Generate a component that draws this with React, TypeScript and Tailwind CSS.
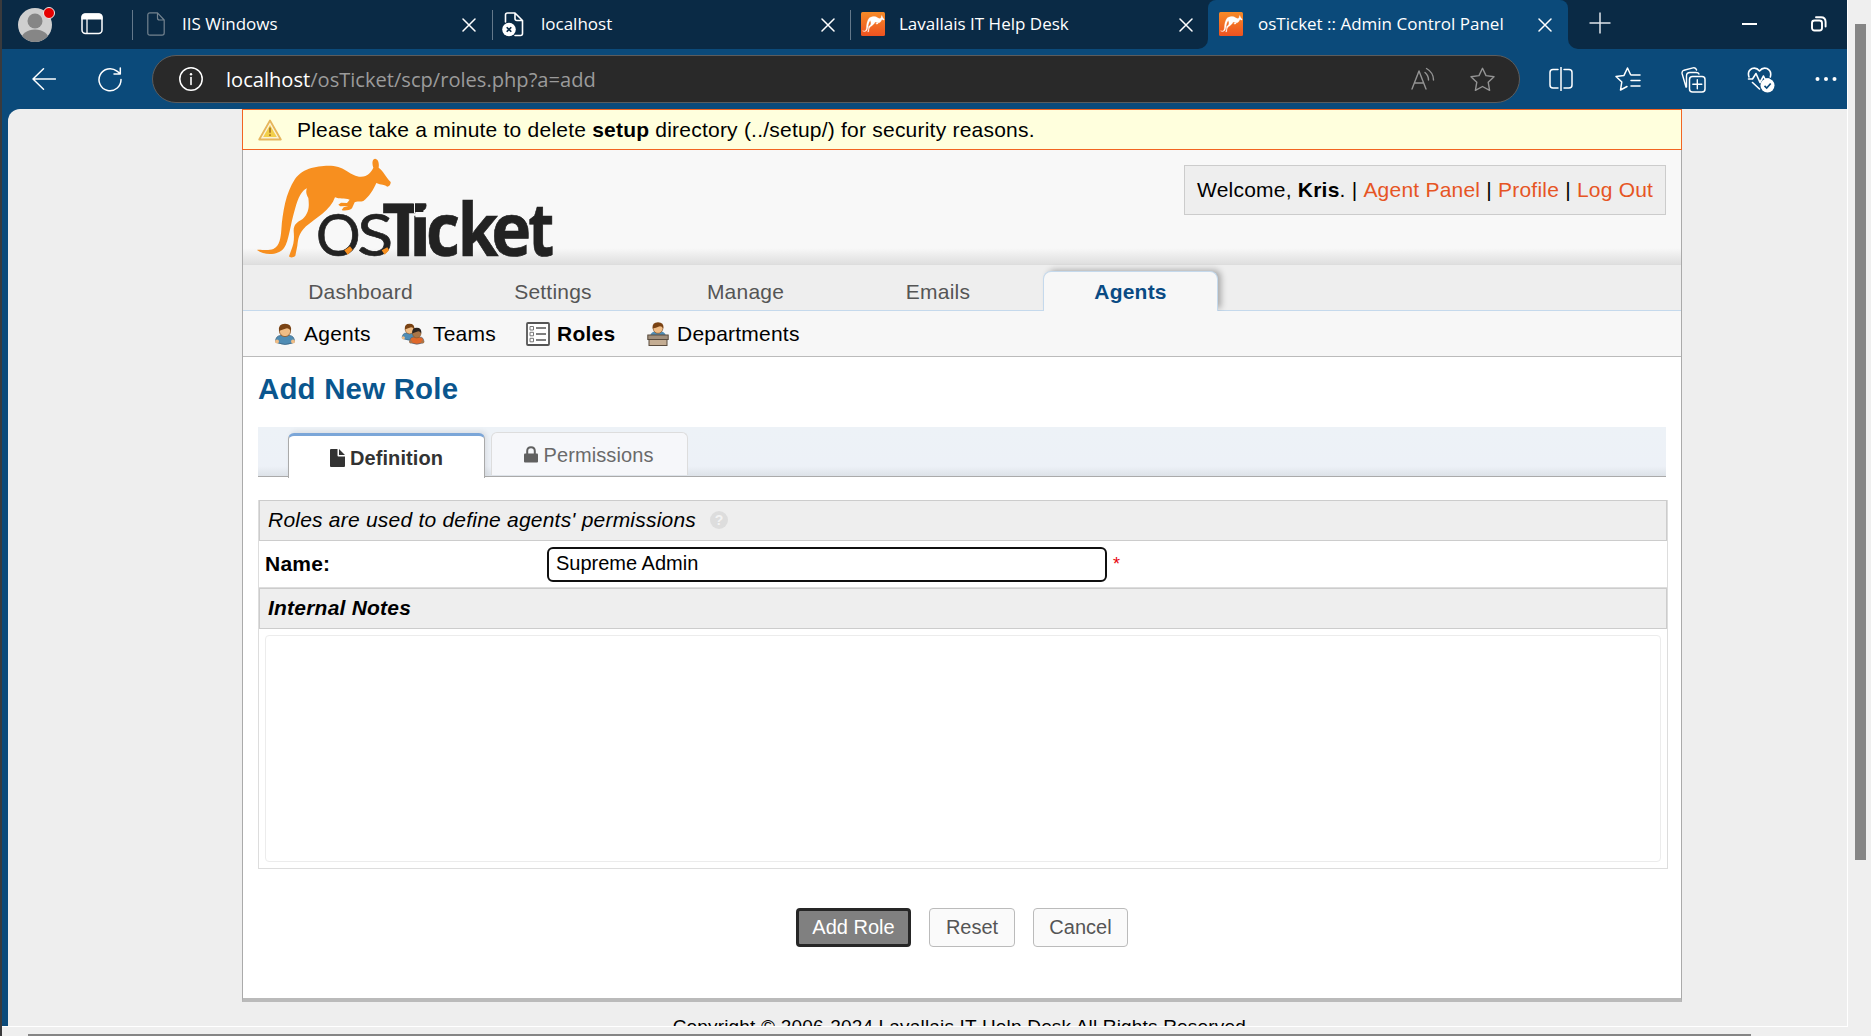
import React from 'react';

const ROO =
  'M66 433 C72 430 98 437 115 430 C135 420 137 395 139 372 C143 320 152 262 180 220 C205 185 250 180 288 180 C332 182 346 213 378 213 C398 213 410 198 415 186 C410 172 412 160 420 159 C430 160 433 172 431 186 C444 194 453 215 467 229 C468 236 462 243 457 243 C450 237 438 238 424 232 C417 250 400 276 385 286 C374 290 366 285 359 290 L351 308 C345 315 325 316 320 313 L326 305 L340 301 L316 302 L310 297 L318 291 L336 292 L344 282 C328 277 313 281 300 275 C288 312 240 340 213 362 C190 385 190 400 187 420 L181 450 C176 456 165 457 162 452 L168 435 C177 415 178 400 176 375 C176 356 186 350 203 340 C225 320 222 295 220 277 C213 265 212 255 216 248 C200 255 190 275 180 310 C165 360 162 405 147 427 C130 450 88 450 66 433 Z';

const stroke = { fill: 'none', stroke: 'currentColor', strokeLinecap: 'round', strokeLinejoin: 'round' } as const;

const wordmark: [string, number, number][] = [
  ['c', 573, 102],
  ['k', 668, 122],
  ['e', 769, 120],
  ['t', 880, 78],
];

function Logo() {
  return (
    <svg width="298" height="101" viewBox="66 157 894 303" className="block overflow-visible">
      <path d={ROO} fill="#f78f1f" />
      <text y="451" fill="#222" stroke="#222" strokeWidth="2" fontFamily="'Open Sans', sans-serif" fontSize="220" fontWeight="700">
        <tspan x="243" fontFamily="Lato, sans-serif" fontSize="174" fontWeight="400" textLength="134" lengthAdjust="spacingAndGlyphs">O</tspan>
        <tspan x="367" fontFamily="Lato, sans-serif" fontSize="174" fontWeight="400" textLength="108" lengthAdjust="spacingAndGlyphs">S</tspan>
        <tspan x="441">T</tspan>
        <tspan x="522">i</tspan>
        {wordmark.map(([ch, x, w]) => (
          <tspan key={ch} x={x} textLength={w} lengthAdjust="spacingAndGlyphs">{ch}</tspan>
        ))}
      </text>
      <path d="M534 270 H580 V293 H534 Z M537 290 H540 V322 H537 Z M541 319 H574 V335 H541 Z" fill="#f8f8f8" />
      <g fill="#f78f1f">
        <path d="M328 434 L345 422 L353 432 L338 447 Z" />
        <path d="M440 434 L457 425 L462 434 L449 447 Z" />
      </g>
    </svg>
  );
}

function Favicon() {
  return (
    <svg width="24" height="24" viewBox="0 0 24 24" className="shrink-0">
      <defs>
        <linearGradient id="fav" x1="0" y1="0" x2="0" y2="1">
          <stop offset="0" stopColor="#f68b28" />
          <stop offset="1" stopColor="#ee5220" />
        </linearGradient>
      </defs>
      <rect width="24" height="24" rx="1.5" fill="url(#fav)" />
      <g transform="translate(-2.2 -5.6) scale(0.0545 0.0565)">
        <path d={ROO} fill="#fff" stroke="#fff" strokeWidth="4" />
      </g>
    </svg>
  );
}

function Close() {
  return (
    <svg width="14" height="14" viewBox="0 0 14 14" className="shrink-0 text-white">
      <path d="M1 1 L13 13 M13 1 L1 13" {...stroke} strokeWidth="1.5" />
    </svg>
  );
}

function Person({ shirt = '#4f8cb4', skin = '#f0bd86', hair = '#7a4314' }: { shirt?: string; skin?: string; hair?: string }) {
  return (
    <g>
      <path d="M1.5 19 Q1.5 12.5 7 12.5 L15 12.5 Q20.500 12.5 20.500 19 L18.500 20 Q11 23 4 20 Z" fill={shirt} stroke="#3a6583" strokeWidth=".8" />
      <circle cx="3" cy="18.500" r="2" fill={skin} />
      <circle cx="19" cy="18.500" r="2" fill={skin} />
      <circle cx="11" cy="8" r="5.600" fill={skin} stroke="#8a5526" strokeWidth=".8" />
      <path d="M5 8 Q4 .8 11 .8 Q18 .8 17 8 Q15 4.800 12 5.500 Q8 6.500 5 8 Z" fill={hair} />
    </g>
  );
}

function TitleBar() {
  return (
    <div className="flex h-[49px] shrink-0 items-center bg-[#0a2a45] text-[17px] text-white">
      <svg width="38" height="38" viewBox="0 0 38 38" className="ml-[15px] -mt-[3px] shrink-0">
        <clipPath id="av"><circle cx="18" cy="21" r="17" /></clipPath>
        <g clipPath="url(#av)">
          <rect width="38" height="38" fill="#cfcfcf" />
          <circle cx="18" cy="17" r="7.500" fill="#868686" />
          <ellipse cx="18" cy="36" rx="14" ry="10.500" fill="#868686" />
        </g>
        <circle cx="32" cy="9" r="5.500" fill="#e60000" stroke="#eee" strokeWidth="1" />
      </svg>
      <svg width="22" height="22" viewBox="0 0 22 22" className="-mt-[1px] ml-[26px] shrink-0">
        <rect x="1" y="1" width="20" height="19.500" rx="3.500" fill="none" stroke="#fff" strokeWidth="1.500" />
        <path d="M.4 6.500 V4 Q.4 .4 4 .4 H18 Q21.600 .4 21.600 4 V6.500 Z" fill="#fff" />
        <path d="M6 6 V20" stroke="#fff" strokeWidth="1.300" />
      </svg>
      <div className="ml-[29px] h-[30px] w-px bg-[#64788a]" />
      <svg width="18" height="24" viewBox="0 0 18 24" className="-mt-[1px] ml-[14px] shrink-0 text-[#74838f]">
        <path d="M3 .8 H10.500 L17.200 8 V21 Q17.200 23.200 15 23.200 H3 Q.8 23.200 .8 21 V3 Q.8 .8 3 .8 Z M10.500 .8 V6 Q10.500 8 12.500 8 H17" {...stroke} strokeWidth="1.200" />
      </svg>
      <div className="ml-[17px] w-[280px] pb-[2px]">IIS Windows</div>
      <Close />
      <div className="ml-[16px] h-[30px] w-px bg-[#64788a]" />
      <svg width="22" height="25" viewBox="0 0 22 25" className="-mt-[1px] ml-[9px] shrink-0 text-white">
        <path d="M3.500 10 V3 Q3.500 1 5.500 1 H13 L20.500 8.500 V21.500 Q20.500 23.500 18.500 23.500 H13 M13 1 V6.500 Q13 8.500 15 8.500 H20.500" {...stroke} strokeWidth="1.600" />
        <circle cx="7" cy="17.500" r="6.800" fill="#fff" />
        <path d="M4.700 15.200 L9.300 19.800 M9.300 15.200 L4.700 19.800" stroke="#0a2a45" strokeWidth="1.600" />
      </svg>
      <div className="ml-[17px] w-[280px] pb-[2px]">localhost</div>
      <Close />
      <div className="ml-[15px] h-[30px] w-px bg-[#64788a]" />
      <div className="-mt-[1px] ml-[10px] flex"><Favicon /></div>
      <div className="ml-[14px] w-[280px] pb-[2px]">Lavallais IT Help Desk</div>
      <Close />
      <div className="ml-[5px] h-[49px] w-[10px] bg-[#0b4a7a]"><div className="h-[49px] w-[10px] rounded-br-[10px] bg-[#0a2a45]" /></div>
      <div className="flex h-[49px] w-[360px] items-center rounded-t-[8px] bg-[#0b4a7a]">
        <div className="-mt-[1px] ml-[11px] flex"><Favicon /></div>
        <div className="ml-[15px] w-[280px] pb-[2px] whitespace-nowrap">osTicket :: Admin Control Panel</div>
        <Close />
      </div>
      <div className="h-[49px] w-[10px] bg-[#0b4a7a]"><div className="h-[49px] w-[10px] rounded-bl-[10px] bg-[#0a2a45]" /></div>
      <svg width="22" height="22" viewBox="0 0 22 22" className="-mt-[3px] ml-[11px] shrink-0"><path d="M11 .5 V21.500 M.5 11 H21.500" stroke="#dfe5ea" strokeWidth="1.500" /></svg>
      <div className="-mt-[2px] ml-[131px] h-[2px] w-[15px] bg-white" />
      <svg width="16" height="16" viewBox="0 0 16 16" className="-mt-[1px] ml-[54px] shrink-0 text-white">
        <rect x="1" y="4.500" width="10" height="10" rx="2.500" {...stroke} strokeWidth="1.900" />
        <path d="M5 1.200 H10 Q14.600 1.200 14.600 6 V10.500" {...stroke} strokeWidth="1.900" />
      </svg>
    </div>
  );
}

function Toolbar() {
  return (
    <div className="flex h-[60px] shrink-0 items-center bg-[#0b4a7a] text-white">
      <svg width="24" height="22" viewBox="0 0 24 22" className="ml-[30px] shrink-0"><path d="M23.500 11 H1 M11.500 .8 L1 11 L11.500 21.200" {...stroke} strokeWidth="1.500" /></svg>
      <svg width="24" height="25" viewBox="0 0 24 25" className="ml-[42px] shrink-0">
        <path d="M23 12.500 A11 11 0 1 1 19 4.200 L22 6.500 M22.300 1 V6.900 H16" {...stroke} strokeWidth="1.500" />
      </svg>
      <div className="ml-[30px] flex h-[48px] w-[1368px] items-center rounded-full border border-[#5c5c5c] bg-[#292929]">
        <svg width="24" height="24" viewBox="0 0 24 24" className="ml-[26px] shrink-0">
          <circle cx="12" cy="12" r="11.200" {...stroke} strokeWidth="1.500" />
          <path d="M12 10.500 V17.500" {...stroke} strokeWidth="1.600" />
          <circle cx="12" cy="7.200" r="1.200" fill="#fff" />
        </svg>
        <div className="ml-[23px] flex-1 pt-[2px] text-[20.100px] text-[#9b9b9b]"><span className="text-white">localhost</span>/osTicket/scp/roles.php?a=add</div>
        <svg width="24" height="24" viewBox="0 0 24 24" className="shrink-0 text-[#949494]">
          <path d="M1 22 L8 4 L15 22 M3.500 16 H12.500" {...stroke} strokeWidth="1.400" />
          <path d="M14 5.500 Q17.500 8.500 17.500 13 M15.500 1.500 Q22.500 5.500 22.500 13" {...stroke} strokeWidth="1.400" />
        </svg>
        <svg width="25" height="25" viewBox="0 0 25 25" className="mr-[24px] ml-[35px] shrink-0 text-[#949494]">
          <path d="M12.500 1.300 L16 8.600 L24 9.700 L18.200 15.200 L19.600 23.300 L12.500 19.500 L5.400 23.300 L6.800 15.200 L1 9.700 L9 8.600 Z" {...stroke} strokeWidth="1.400" />
        </svg>
      </div>
      <svg width="24" height="24" viewBox="0 0 24 24" className="ml-[29px] shrink-0">
        <path d="M9 2.500 H4 Q1 2.500 1 5.500 V18 Q1 21 4 21 H9 M15 2.500 H20 Q23 2.500 23 5.500 V18 Q23 21 20 21 H15 M12 .5 V23.500" {...stroke} strokeWidth="1.500" />
      </svg>
      <svg width="26" height="24" viewBox="0 0 26 24" className="ml-[42px] shrink-0">
        <path d="M15.500 7.500 L12.500 1 L9 8.400 L1 9.500 L6.800 15 L5.500 23 L12 19.500 M16 8 H25 M16 13.500 H25 M16 19 H25" {...stroke} strokeWidth="1.500" />
      </svg>
      <svg width="25" height="26" viewBox="0 0 25 26" className="mt-px ml-[40px] shrink-0">
        <rect x="8.500" y="9.500" width="15.500" height="15.500" rx="3" {...stroke} strokeWidth="1.500" />
        <path d="M16.300 12.700 V21.700 M11.800 17.200 H20.800" {...stroke} strokeWidth="1.400" />
        <path d="M5 20 L1.200 7 Q.4 4 3 3.200 L12 .9 Q14.800 .3 15.600 3 M5.500 20 V9 Q5.500 5.500 9 5.500 H15 Q17.500 5.500 18 7" {...stroke} strokeWidth="1.400" />
      </svg>
      <svg width="28" height="26" viewBox="0 0 28 26" className="mt-[2px] ml-[41px] shrink-0">
        <path d="M2 10 Q0 4 5 1.500 Q9.500 0 12.500 4 Q15.500 0 20 1.500 Q25 4 23.300 10 M1.500 12 H5.500 L9 6.500 L13 15.500 L16.500 9 L18 12 H22 M5.500 15.500 L12.500 22" {...stroke} strokeWidth="1.600" />
        <circle cx="20.500" cy="18.500" r="7" fill="#fff" />
        <path d="M17.500 18.800 L19.700 21 L23.700 16.500" fill="none" stroke="#0b4a7a" strokeWidth="1.700" />
      </svg>
      <svg width="22" height="6" viewBox="0 0 22 6" className="ml-[40px] shrink-0" fill="#fff"><circle cx="2.500" cy="3" r="2" /><circle cx="11" cy="3" r="2" /><circle cx="19.500" cy="3" r="2" /></svg>
    </div>
  );
}

const navTabs = ['Dashboard', 'Settings', 'Manage', 'Emails'];

function Page() {
  return (
    <div className="ml-[234px] h-[893px] w-[1440px] shrink-0 border-x border-b-4 border-[#aaa] border-b-[#bababa] bg-white tracking-[0.220px]">
      <div className="-mx-px flex h-[41px] items-center border border-[#f26522] bg-[#ffffdd]">
        <svg width="24" height="22" viewBox="0 0 24 22" className="ml-[15px]">
          <path d="M12 1.500 L22.800 20.500 H1.200 Z" fill="#fbf3d8" stroke="#e6b65c" strokeWidth="1.800" strokeLinejoin="round" />
          <path d="M12 6 L18.800 18 H5.200 Z" fill="#f2cf4a" />
          <path d="M12 8.500 V13.800 M12 15.300 V17" stroke="#b5852b" strokeWidth="2" />
        </svg>
        <p className="ml-[15px]">Please take a minute to delete <b>setup</b> directory (../setup/) for security reasons.</p>
      </div>

      <div className="flex h-[115px] items-start justify-between border-b border-[#ddd] bg-[linear-gradient(to_bottom,#f8f8f8_0%,#f8f8f8_86%,#dfdfdf_100%)] pl-[14px] pr-[15px]">
        <div className="mt-[8px]"><Logo /></div>
        <div className="mt-[15px] flex h-[50px] w-[482px] items-center border border-[#ccc] bg-[#eee] pl-[12px] whitespace-pre">
          Welcome, <b>Kris</b>. | <a className="text-[#e65524]">Agent Panel</a> | <a className="text-[#e65524]">Profile</a> | <a className="text-[#e65524]">Log Out</a>
        </div>
      </div>

      <div className="flex h-[46px] border-b border-[#c5d9ec] bg-[#eee] pl-[30px] pt-[6px] text-[#555]">
        {navTabs.map((t) => (
          <div key={t} className="mr-[17.500px] flex h-[41px] w-[175px] items-center justify-center">{t}</div>
        ))}
        <div className="flex h-[40px] w-[175px] items-center justify-center rounded-t-[8px] border border-b-0 border-[#c5d9ec] bg-[#f7f7f7] font-bold text-[#0a4b84] shadow-[4px_-2px_6px_-1px_rgba(0,0,0,0.3)] [clip-path:inset(-10px_-12px_0px_-10px)]">Agents</div>
      </div>

      <div className="flex h-[46px] items-center border-b border-[#bbb] bg-[#f7f7f7] text-black">
        <svg width="22" height="22" viewBox="0 0 22 22" className="ml-[31px]"><Person /></svg>
        <div className="ml-[8px] w-[97px]">Agents</div>
        <svg width="24" height="22" viewBox="0 0 24 22">
          <g transform="scale(.78 .8)"><Person /></g>
          <g transform="translate(7.500 4) scale(.75 .8)"><Person shirt="#e0682a" skin="#a97548" hair="#2c2420" /></g>
        </svg>
        <div className="ml-[8px] w-[93px]">Teams</div>
        <svg width="24" height="24" viewBox="0 0 24 24">
          <rect x="1" y="1" width="22" height="22" rx="1" fill="#fff" stroke="#555" strokeWidth="1.800" />
          <path d="M10 6 H20 M10 12 H20 M10 18 H20" stroke="#555" strokeWidth="1.300" />
          <path d="M4 4.500 h3.500 v3.500 h-3.500 Z M4 10.300 h3.500 v3.500 h-3.500 Z M4 16.300 h3.500 v3.500 h-3.500 Z" fill="none" stroke="#777" strokeWidth="1" />
        </svg>
        <div className="ml-[7px] w-[90px] font-bold">Roles</div>
        <svg width="22" height="24" viewBox="0 0 22 24">
          <path d="M3 14 Q4 9 11 9 Q18 9 19 14 Z" fill="#4f8cb4" />
          <circle cx="11" cy="6.500" r="4.800" fill="#f0bd86" stroke="#8a5526" strokeWidth=".7" />
          <path d="M5.500 6.500 Q5 .2 11 .2 Q17 .2 16.500 6.500 Q14.500 3.800 12 4.500 Q9 6 5.500 6.500 Z" fill="#7a4314" />
          <rect x=".8" y="13" width="20.400" height="4.500" fill="#a08f7c" stroke="#5a4c3e" />
          <rect x="2" y="17.500" width="18" height="6" fill="#c4ad93" stroke="#5a4c3e" />
        </svg>
        <div className="ml-[8px]">Departments</div>
      </div>

      <div className="pl-[15px] pr-[14px]">
        <h2 className="pt-[14px] text-[29.400px] leading-[36px] font-bold text-[#0a568e]">Add New Role</h2>

        <div className="mt-[20px] mr-px flex h-[50px] border-b border-[#aaa] bg-[linear-gradient(to_bottom,#edf2f7_0%,#edf1f7_80%,#dde2e8_100%)] pl-[30px] text-[20px] tracking-[0.100px]">
          <div className="mt-[6px] flex h-[45px] w-[197px] items-center justify-center rounded-t-[6px] border border-t-[3px] border-b-0 border-[#aaa] border-t-[#7ba6d8] bg-white pt-[1px] font-bold text-[#333] shadow-[2px_-2px_5px_rgba(0,0,0,0.08)] [clip-path:inset(-8px_-8px_0px_-8px)]">
            <svg width="15" height="18" viewBox="0 0 15 18" className="mr-[5px]"><path d="M0 1 Q0 0 1 0 H7.500 V6.500 Q7.500 7.500 8.500 7.500 H15 V17 Q15 18 14 18 H1 Q0 18 0 17 Z M9 0 L15 6 H9 Z" fill="#333" /></svg>
            Definition
          </div>
          <div className="mt-[5px] ml-[6px] flex h-[43px] w-[197px] items-center justify-center rounded-t-[6px] border border-b-0 border-[#ddd] bg-[#f6f7fa] pt-[2px] pr-px text-[#6a6a6a]">
            <svg width="14" height="17" viewBox="0 0 14 17" className="mr-[5px] -mt-[2px]"><path d="M3.200 8 V5 Q3.200 1.200 7 1.200 Q10.800 1.200 10.800 5 V8" fill="none" stroke="#606060" strokeWidth="2" /><rect y="7.500" width="14" height="9" rx="1" fill="#606060" /></svg>
            Permissions
          </div>
        </div>

        <div className="mt-[23px] -mr-px h-[369px] border border-t-0 border-[#ddd]">
          <div className="flex h-[41px] items-center border border-[#ccc] bg-[#eee] pb-[2px] pl-[8px] italic">
            Roles are used to define agents' permissions
            <span className="ml-[14px] flex h-[18px] w-[18px] items-center justify-center rounded-full bg-[#ddd] text-[14px] font-bold not-italic tracking-normal text-[#f3f3f3]">?</span>
          </div>
          <div className="flex h-[47px] items-center border-b border-[#ddd] pl-[6px]">
            <b className="w-[282px]">Name:</b>
            <div className="flex h-[35px] w-[560px] items-center rounded-[6px] border-[2.500px] border-[#101010] bg-white pb-[2px] pl-[7px] text-[20px] tracking-normal">Supreme Admin</div>
            <span className="ml-[6px] text-[18px] leading-none text-red-600">*</span>
          </div>
          <div className="flex h-[41px] items-center border border-[#ccc] bg-[#eee] pb-[2px] pl-[8px] font-bold italic">Internal Notes</div>
          <div className="mx-[6px] mt-[6px] h-[227px] rounded-[4px] border border-[#ececec]" />
        </div>

        <div className="mt-[39px] -ml-px flex justify-center gap-[18px] text-[20px] tracking-normal text-[#555]">
          <div className="flex h-[39px] w-[115px] items-center justify-center rounded-[4px] border-[3px] border-[#262626] bg-[#808080] pb-[2px] text-white">Add Role</div>
          <div className="flex h-[39px] w-[86px] items-center justify-center rounded-[4px] border-[1.500px] border-[#bbb] bg-[#fafafa] pb-[2px]">Reset</div>
          <div className="flex h-[39px] w-[95px] items-center justify-center rounded-[4px] border-[1.500px] border-[#bbb] bg-[#fafafa] pb-[2px]">Cancel</div>
        </div>
      </div>
    </div>
  );
}

export default function App() {
  return (
    <div className="flex h-[1036px] w-[1871px] overflow-hidden bg-[#efefef] font-['Open_Sans',sans-serif]">
      <div className="w-[2px] shrink-0 bg-[#3a3a3c]" />
      <div className="flex w-[1846px] shrink-0 flex-col">
        <div className="flex h-[1026px] w-[1845px] shrink-0 flex-col">
          <TitleBar />
          <Toolbar />
          <div className="flex min-h-0 flex-1 bg-[#0b4a7a] pl-[6px]">
            <div className="flex-1 overflow-hidden rounded-tl-[12px] bg-[#eee] font-['Liberation_Sans',Arial,sans-serif] text-[21px] leading-[24px] text-black">
              <Page />
              <p className="mt-[13px] ml-[234px] w-[1440px] text-center text-[19px] tracking-[0.180px]">Copyright © 2006-2024 Lavallais IT Help Desk All Rights Reserved.</p>
            </div>
          </div>
        </div>
        <div className="h-px shrink-0 bg-white" />
        <div className="mt-[7px] ml-[26px] h-[2px] w-[1723px] shrink-0 bg-[#858585]" />
      </div>
      <div className="-ml-px h-[1027px] w-px bg-white" />
      <div className="mt-[24px] ml-[7px] h-[836px] w-[11px] bg-[#858585]" />
    </div>
  );
}
